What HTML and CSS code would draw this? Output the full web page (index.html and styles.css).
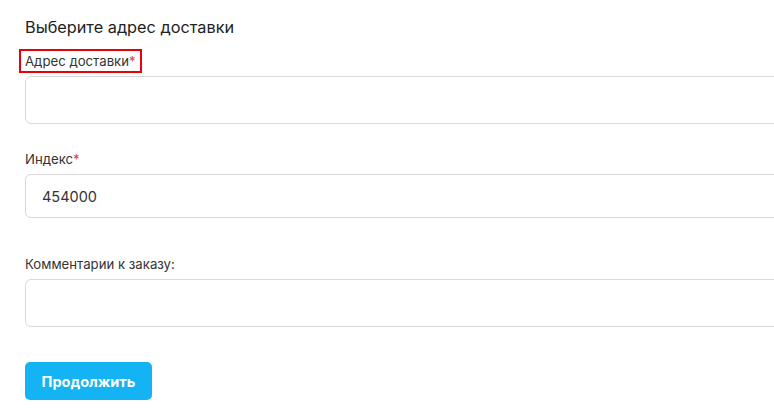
FILE: index.html
```html
<!DOCTYPE html>
<html lang="ru">
<head>
<meta charset="utf-8">
<link rel="stylesheet" href="styles.css">
</head>
<body>
<div class="page">
  <h2 class="title">Выберите адрес доставки</h2>
  <form class="form">
    <div class="field field-address">
      <label class="label label-highlight">Адрес доставки<span class="req">*</span></label>
      <input class="input input-tall" type="text">
    </div>
    <div class="field field-index">
      <label class="label">Индекс<span class="req">*</span></label>
      <input class="input input-short" type="text" value="454000">
    </div>
    <div class="field field-comment">
      <label class="label">Комментарии к заказу:</label>
      <input class="input input-tall" type="text">
    </div>
    <button class="btn" type="button">Продолжить</button>
  </form>
</div>
</body>
</html>
```

FILE: styles.css
```css
html, body {
  margin: 0;
  padding: 0;
  background: #ffffff;
  overflow: hidden;
}
body {
  font-family: Inter, "Noto Sans", "DejaVu Sans", sans-serif;
  color: #333333;
  width: 774px;
  height: 420px;
}
.page {
  padding: 16px 0 0 25px;
}
.title {
  margin: 0;
  font-size: 16.3px;
  font-weight: 400;
  color: #222222;
  line-height: 22px;
}
.form {
  display: flex;
  flex-direction: column;
  align-items: flex-start;
}
.field {
  display: flex;
  flex-direction: column;
  align-items: flex-start;
}
.field-address { margin-top: 11px; }
.field-index { margin-top: 27px; }
.field-comment { margin-top: 38px; }
.label {
  font-size: 13.2px;
  line-height: 16px;
  color: #333333;
  margin-bottom: 7px;
}
.label-highlight {
  border: 2px solid #e8000b;
  padding: 2px 4px;
  margin: 0 0 3px -6px;
}
.req {
  color: #e53935;
}
.input {
  box-sizing: border-box;
  width: 790px;
  border: 1px solid #d9d9d9;
  border-radius: 6px;
  background: #ffffff;
  font-family: inherit;
  font-size: 14.5px;
  color: #333333;
  padding: 0 16px;
  margin: 0;
  outline: none;
}
.input-tall { height: 48px; }
.input-short { height: 44px; }
.btn {
  margin-top: 35px;
  width: 127px;
  height: 38px;
  border: none;
  border-radius: 5px;
  background: #14b4f4;
  color: #ffffff;
  font-family: inherit;
  font-size: 14.5px;
  font-weight: 700;
  cursor: pointer;
  padding: 0;
}
```
